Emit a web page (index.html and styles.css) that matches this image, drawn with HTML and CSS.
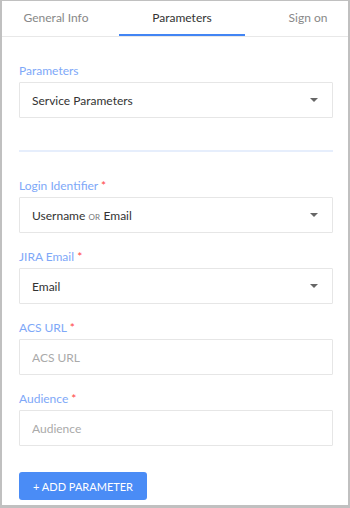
FILE: index.html
```html
<!DOCTYPE html>
<html lang="en">
<head>
    <meta charset="UTF-8">
    <meta name="viewport" content="width=device-width, initial-scale=1.0">
    <title>Parameters</title>
    <link rel="stylesheet" href="styles.css">
</head>
<body>
    <div class="panel">
        <div class="tabs">
            <div class="tab-list">
                <div class="tab">General Info</div>
                <div class="tab active">Parameters</div>
                <div class="tab">Sign on</div>
            </div>
        </div>

        <div class="content">
            <div class="field">
                <label>Parameters</label>
                <div class="select">
                    <span>Service Parameters</span>
                    <span class="caret"></span>
                </div>
            </div>

            <div class="divider"></div>

            <div class="field">
                <label>Login Identifier <span class="req">*</span></label>
                <div class="select">
                    <span>Username <small>OR</small> Email</span>
                    <span class="caret"></span>
                </div>
            </div>

            <div class="field">
                <label>JIRA Email <span class="req">*</span></label>
                <div class="select">
                    <span>Email</span>
                    <span class="caret"></span>
                </div>
            </div>

            <div class="field">
                <label>ACS URL <span class="req">*</span></label>
                <input type="text" placeholder="ACS URL">
            </div>

            <div class="field">
                <label>Audience <span class="req">*</span></label>
                <input type="text" placeholder="Audience">
            </div>

            <button class="btn-add">+ Add Parameter</button>
        </div>
    </div>
</body>
</html>
```

FILE: styles.css
```css
:root {
    --blue: #4a8cf6;
    --label: #7ea8f8;
    --border: #e6e6e6;
    --text: #333;
}

* {
    margin: 0;
    padding: 0;
    box-sizing: border-box;
    font-family: 'Lato', 'Open Sans', sans-serif;
}

body {
    width: 350px;
    height: 508px;
    background: #fff;
}

.panel {
    height: 100%;
    border: 2px solid #c0c0c0;
    border-top-width: 1px;
    border-bottom-width: 3px;
    overflow: hidden;
}

.tabs {
    height: 36px;
    border-bottom: 1px solid #e8e8e8;
    overflow: hidden;
}

.tab-list {
    display: flex;
    margin-left: -9px;
}

.tab {
    flex: 0 0 126px;
    height: 35px;
    line-height: 34px;
    text-align: center;
    font-size: 12px;
    color: #888;
    border-bottom: 2px solid transparent;
}

.tab.active {
    color: #333;
    border-bottom-color: #4285f4;
}

.content {
    padding: 27px 15px 0 17px;
}

.field {
    margin-bottom: 17px;
}

.field label {
    display: block;
    font-size: 12px;
    line-height: 14px;
    color: var(--label);
    margin-bottom: 4px;
}

.req {
    color: #f44;
}

.select,
.field input {
    display: flex;
    align-items: center;
    justify-content: space-between;
    width: 100%;
    height: 36px;
    padding: 0 14px 0 12px;
    border: 1px solid var(--border);
    border-radius: 1px;
    font-size: 12px;
    color: var(--text);
    background: #fff;
}

.select small {
    font-size: 8px;
    color: #777;
    letter-spacing: 0.3px;
}

.field input {
    outline: none;
}

.field input::placeholder {
    color: #aaa;
}

.caret {
    width: 0;
    height: 0;
    border-left: 4px solid transparent;
    border-right: 4px solid transparent;
    border-top: 4px solid #666;
}

.divider {
    height: 2px;
    background: #e6eefc;
    margin: 32px 0 27px;
}

.btn-add {
    margin-top: 9px;
    height: 28px;
    padding: 0 14px;
    border: none;
    border-radius: 3px;
    background: var(--blue);
    color: #fff;
    font-family: 'Lato', sans-serif;
    font-size: 11px;
    text-transform: uppercase;
    cursor: pointer;
}
```
